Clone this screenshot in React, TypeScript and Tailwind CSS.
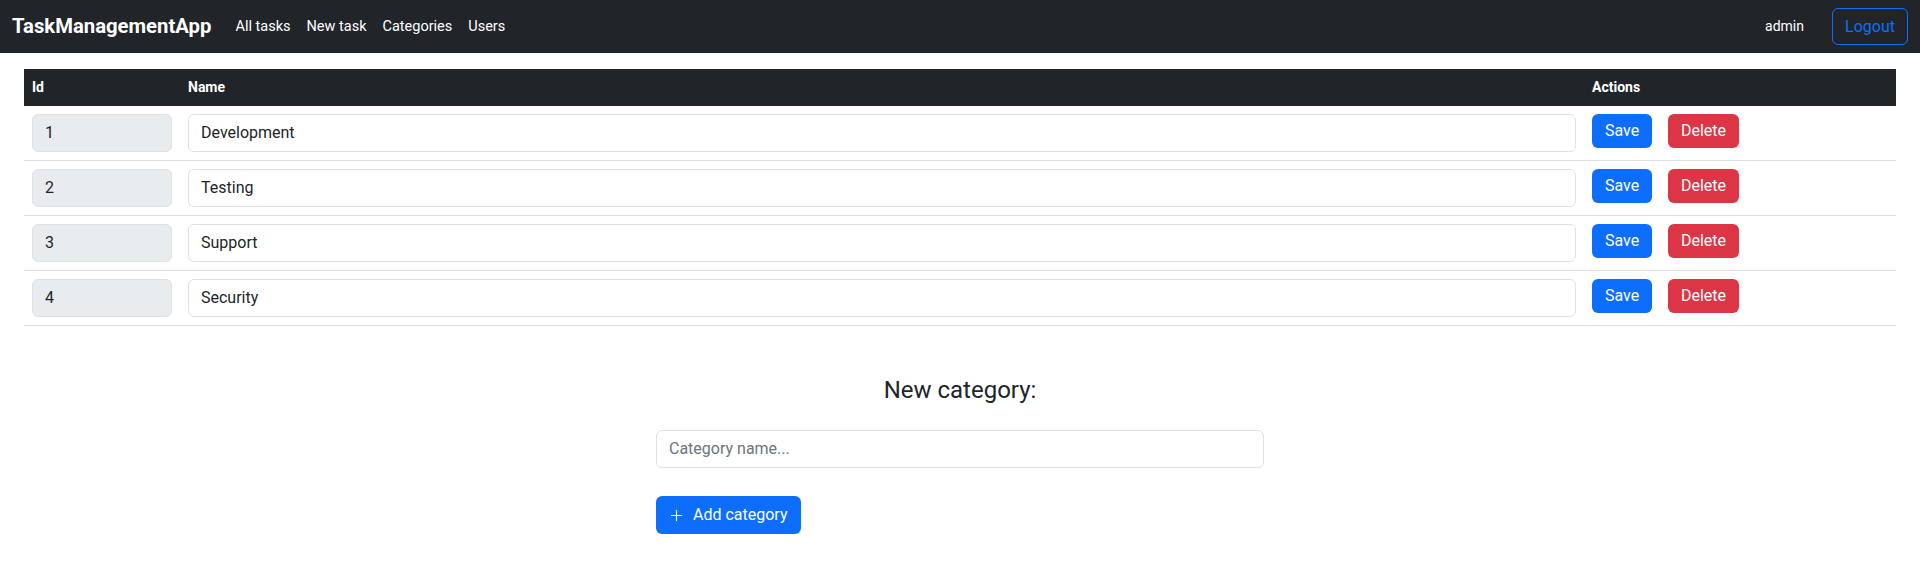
import React from 'react';

const categories = [
  { id: 1, name: 'Development' },
  { id: 2, name: 'Testing' },
  { id: 3, name: 'Support' },
  { id: 4, name: 'Security' },
];

function PlusIcon() {
  return (
    <svg width="13" height="13" viewBox="0 0 16 16" fill="currentColor" aria-hidden="true">
      <path
        fillRule="evenodd"
        d="M8 1a.7.7 0 0 1 .7.7v5.6h5.6a.7.7 0 0 1 0 1.4H8.7v5.6a.7.7 0 0 1-1.4 0V8.7H1.7a.7.7 0 0 1 0-1.4h5.6V1.7A.7.7 0 0 1 8 1z"
      />
    </svg>
  );
}

export default function App() {
  return (
    <div className="min-h-screen bg-white text-[#212529] font-['Roboto',sans-serif]">
      {/* Navbar */}
      <nav className="h-[53px] bg-[#212529] flex items-center justify-between pl-3 pr-3">
        <div className="flex items-center">
          <span className="text-[20.3px] font-bold text-white mr-4">TaskManagementApp</span>
          <a className="px-2 text-[14.5px] text-white">All tasks</a>
          <a className="px-2 text-[14.5px] text-white">New task</a>
          <a className="px-2 text-[14.5px] text-white">Categories</a>
          <a className="px-2 text-[14.5px] text-white">Users</a>
        </div>
        <div className="flex items-center gap-7">
          <span className="text-[14px] text-white">admin</span>
          <button className="h-[37px] w-[76px] rounded-md border border-[#0d6efd] text-[16px] text-[#0d6efd]">
            Logout
          </button>
        </div>
      </nav>

      {/* Table */}
      <div className="px-6 mt-4">
        <table className="w-full border-collapse">
          <thead>
            <tr className="bg-[#212529] h-[37px] text-white text-[14px] font-bold text-left">
              <th className="w-[156px] px-2">Id</th>
              <th className="px-2">Name</th>
              <th className="w-[312px] px-2">Actions</th>
            </tr>
          </thead>
          <tbody>
            {categories.map((c) => (
              <tr key={c.id} className="border-b border-[#dee2e6]">
                <td className="p-2">
                  <div className="h-[38px] rounded-md border border-[#dee2e6] bg-[#e9ecef] flex items-center px-3 text-[16px]">
                    {c.id}
                  </div>
                </td>
                <td className="p-2">
                  <div className="h-[38px] rounded-md border border-[#dee2e6] bg-white flex items-center px-3 text-[16px]">
                    {c.name}
                  </div>
                </td>
                <td className="p-2">
                  <div className="flex items-center gap-4 h-[38px] pb-1">
                    <button className="h-[34px] w-[60px] rounded-md bg-[#0d6efd] text-white text-[16px]">Save</button>
                    <button className="h-[34px] w-[71px] rounded-md bg-[#dc3545] text-white text-[16px]">Delete</button>
                  </div>
                </td>
              </tr>
            ))}
          </tbody>
        </table>
      </div>

      {/* New category form */}
      <div className="mx-auto w-[608px] mt-[50px]">
        <h4 className="text-[24px] leading-[29px] text-center">New category:</h4>
        <div className="mt-[25px] h-[38px] rounded-md border border-[#dee2e6] bg-white flex items-center px-3 text-[16px] text-[#6c757d]">
          Category name...
        </div>
        <button className="mt-7 h-[38px] rounded-md bg-[#0d6efd] text-white text-[16px] flex items-center gap-[10px] pl-[14px] pr-[13px]">
          <PlusIcon />
          <span>Add category</span>
        </button>
      </div>
    </div>
  );
}
